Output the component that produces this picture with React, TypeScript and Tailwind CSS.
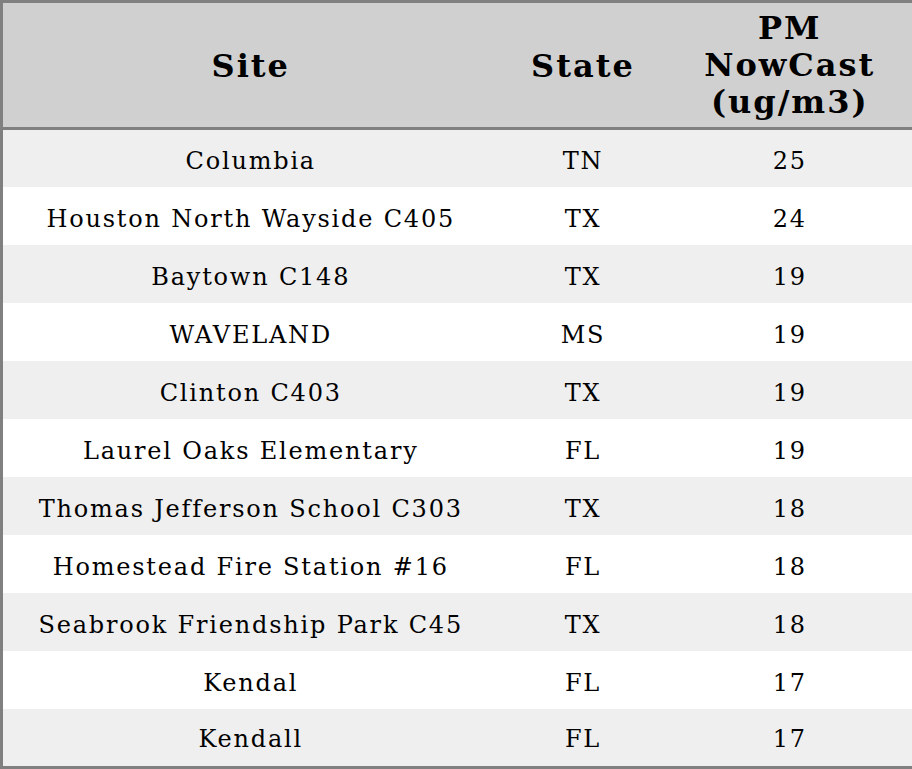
import React from "react";

const rows: [string, string, string][] = [
  ["Columbia", "TN", "25"],
  ["Houston North Wayside C405", "TX", "24"],
  ["Baytown C148", "TX", "19"],
  ["WAVELAND", "MS", "19"],
  ["Clinton C403", "TX", "19"],
  ["Laurel Oaks Elementary", "FL", "19"],
  ["Thomas Jefferson School C303", "TX", "18"],
  ["Homestead Fire Station #16", "FL", "18"],
  ["Seabrook Friendship Park C45", "TX", "18"],
  ["Kendal", "FL", "17"],
  ["Kendall", "FL", "17"],
];

export default function App() {
  return (
    <div
      className="w-[912px] h-[769px] bg-white text-black"
      style={{ fontFamily: '"DejaVu Serif", serif' }}
    >
      <table className="w-[912px] border-collapse border-[3px] border-[#808080] table-fixed">
        <colgroup>
          <col className="w-[497px]" />
          <col className="w-[169px]" />
          <col className="w-[246px]" />
        </colgroup>
        <thead>
          <tr className="bg-[#d0d0d0] h-[127px] border-b-[3px] border-[#808080]">
            <th className="text-[32px] leading-[37px] tracking-[2px] font-bold text-center align-middle pt-[2px] pb-0 px-0">Site</th>
            <th className="text-[32px] leading-[37px] tracking-[2px] font-bold text-center align-middle pt-[2px] pb-0 px-0">State</th>
            <th className="text-[32px] leading-[37px] tracking-[2px] font-bold text-center align-middle p-0">
              PM
              <br />
              NowCast
              <br />
              (ug/m3)
            </th>
          </tr>
        </thead>
        <tbody>
          {rows.map((r, i) => {
            const last = i === rows.length - 1;
            const cell = last
              ? "text-[24px] leading-[28px] tracking-[1.8px] text-center align-middle pt-[4px] pb-0 px-0"
              : "text-[24px] leading-[28px] tracking-[1.8px] text-center align-middle pt-[6px] pb-0 px-0";
            return (
              <tr
                key={i}
                className={(i % 2 === 0 ? "bg-[#efefef] " : "bg-white ") + (last ? "h-[59px]" : "h-[58px]")}
              >
                <td className={cell}>{r[0]}</td>
                <td className={cell}>{r[1]}</td>
                <td className={cell}>{r[2]}</td>
              </tr>
            );
          })}
        </tbody>
      </table>
    </div>
  );
}
